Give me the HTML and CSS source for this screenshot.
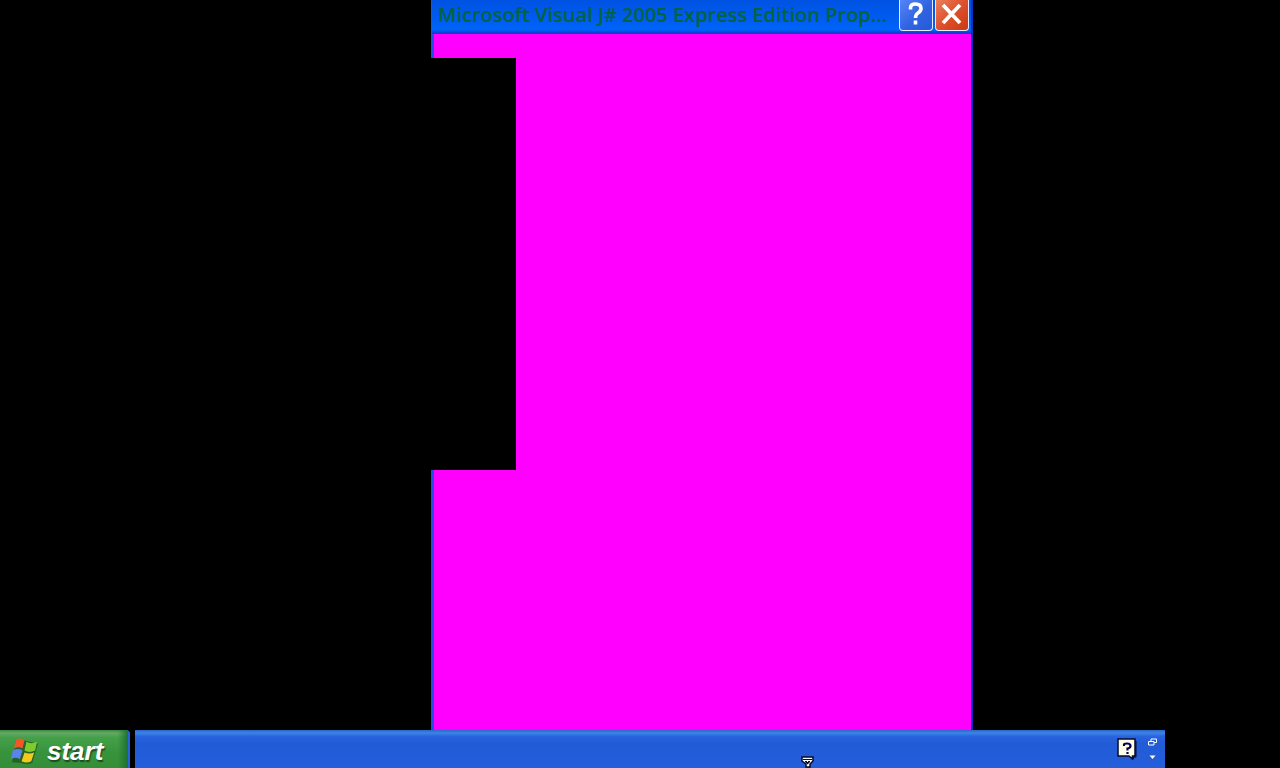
FILE: index.html
```html
<!DOCTYPE html>
<html lang="en">
<head>
<meta charset="utf-8">
<title>Desktop</title>
<link rel="stylesheet" href="styles.css">
</head>
<body>
<main class="desktop">
  <section class="window">
    <header class="titlebar">
      <h1 class="title">Microsoft Visual J# 2005 Express Edition Prop...</h1>
      <button class="caption help" aria-label="Help">
        <svg viewBox="0 0 32 32" fill="none" stroke="#fff" stroke-width="3.600"><path d="M10.500 9.500V8Q10.500 4 15.500 4Q21 4 21 8.500Q21 11 18 13Q15.500 14.500 15.500 18M15.500 20.500V24.500"/></svg>
      </button>
      <button class="caption close" aria-label="Close">
        <svg viewBox="0 0 32 32" fill="none" stroke="#fff" stroke-width="3.800"><path d="M7 5L24 23M24 5L7 23"/></svg>
      </button>
    </header>
    <div class="client"></div>
  </section>
  <div class="shade"></div>
</main>
<footer class="taskbar">
  <button class="start">
    <svg class="flag" viewBox="0 0 30 30">
      <path d="M6 4Q10 1 16 4L29 7L23 27Q17 29 12 27L2 26Z" fill="#1c5422" opacity=".75"/>
      <path d="M6 3Q10 0 15 3L13 12Q9 9 4 12Z" fill="#f0582a"/>
      <path d="M17 5Q22 8 28 5L26 14Q20 17 15 14Z" fill="#7fcb2e"/>
      <path d="M3 14Q8 11 13 14L10 23Q6 20 1 23Z" fill="#5b83ee"/>
      <path d="M15 16Q20 18 25 16L22 25Q17 28 12 25Z" fill="#f3c91d"/>
    </svg>
    <span>start</span>
  </button>
  <div class="tasks">
    <button class="expand" aria-label="Show toolbar">
      <svg viewBox="0 0 14 12"><path d="M1 1H12V5L9 8V11H5V8L1 5Z" fill="#fff" stroke="#050b28" stroke-width="1.500"/><path d="M2 3.500H11" stroke="#050b28"/><path d="M4 5H6V6H7V5H9V6L6.500 8.500L4 6Z" fill="#050b28"/></svg>
    </button>
    <button class="hint" aria-label="Language help">
      <svg viewBox="0 0 22 22"><path d="M2 1H19V18H16.500V21L13 18H2Z" fill="#fffde9" stroke="#050b28" stroke-width="1.500"/><path d="M20 3V19H17.500V21" fill="none" stroke="#050b28"/><path d="M8 8V6.500Q8 5.500 11 5.500Q14.500 5.500 14.500 8Q14.500 10 11.500 10.500V12.500M11.500 14V16" fill="none" stroke="#000050" stroke-width="2.200"/></svg>
    </button>
    <div class="langbar">
      <button aria-label="Restore"><svg viewBox="0 0 9 8" fill="none" stroke="#fff"><path d="M3 1H8.500V4.500H6M3 1V3M.500 3.500H6V7H.500Z"/></svg></button>
      <button aria-label="Options"><svg viewBox="0 0 9 8"><path d="M1.500 2.500H7.500L4.500 6Z" fill="#fff"/></svg></button>
    </div>
  </div>
</footer>
</body>
</html>
```
FILE: styles.css
```css
* { box-sizing: border-box; }
body {
  margin: 0;
  height: 100vh;
  display: flex;
  flex-direction: column;
  overflow: hidden;
  background: #000;
  font-family: "Open Sans", sans-serif;
}
button { border: 0; padding: 0; background: none; }
svg { display: block; }
.desktop { position: relative; flex: 1; min-height: 0; }
.window {
  position: absolute;
  left: 431px;
  top: 0;
  bottom: 0;
  width: 542px;
  display: flex;
  flex-direction: column;
  border-left: 3px solid #1f4fe6;
  border-right: 2px solid #0a2fc4;
}
.titlebar {
  display: flex;
  align-items: flex-start;
  gap: 2px;
  height: 34px;
  margin-left: -2px;
  padding: 0 2px 0 6px;
  background: linear-gradient(#0052e2, #005cf0 55%, #0064fa 88%, #0a40cc 97%);
}
.title {
  flex: 1;
  margin: 0;
  overflow: hidden;
  white-space: nowrap;
  color: #006340;
  font: 600 20px/30px "Open Sans", sans-serif;
}
.caption {
  width: 34px;
  height: 31px;
  border: 1px solid #e4ecff;
  border-top: 0;
  border-radius: 0 0 4px 4px;
}
.help { background: linear-gradient(135deg, #5585f5, #2f63e2 55%, #245ada); }
.close { background: linear-gradient(135deg, #ec805a, #dc502b 50%, #c93a12); }
.client { flex: 1; background: #f0f; }
.shade {
  position: absolute;
  left: 0;
  top: 58px;
  width: 516px;
  height: 412px;
  background: #000;
}
.taskbar { display: flex; gap: 5px; height: 38px; padding-right: 115px; }
.start {
  display: flex;
  align-items: center;
  gap: 8px;
  width: 130px;
  padding: 4px 0 0 10px;
  border-right: 2px solid #2563dc;
  border-radius: 0 4px 0 0;
  background:
    linear-gradient(90deg, transparent 92%, #1f7030),
    linear-gradient(#3c8a41, #62a965 8%, #45a04a 20%, #37933b 60%, #348e38);
  color: #fff;
  font: italic bold 26px/34px "Liberation Sans", sans-serif;
  text-shadow: 1px 2px 1px #1d4b20;
}
.flag { width: 29px; height: 29px; }
.tasks {
  position: relative;
  flex: 1;
  display: flex;
  justify-content: flex-end;
  align-items: flex-start;
  gap: 10px;
  padding: 8px 8px 0 0;
  background: linear-gradient(#2c66c8, #3c84e8 8%, #2865de 16%, #225bd6 35%, #245edb);
}
.hint svg { width: 22px; height: 22px; }
.langbar { display: grid; gap: 7px; }
.langbar svg { width: 9px; height: 8px; }
.expand { position: absolute; left: 666px; bottom: 0; }
.expand svg { width: 14px; height: 12px; }
```
